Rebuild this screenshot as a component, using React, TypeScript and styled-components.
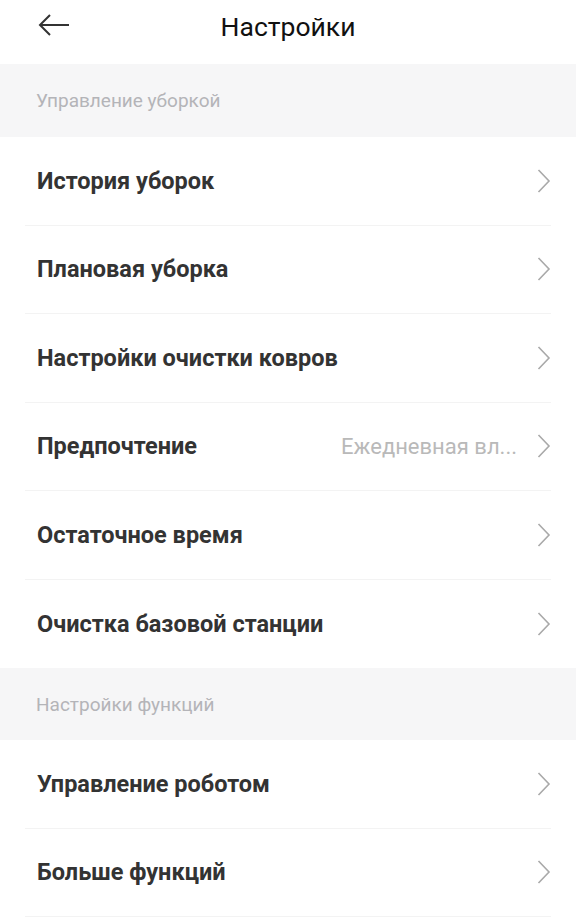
import React from "react";
import styled, { createGlobalStyle } from "styled-components";

const GlobalStyle = createGlobalStyle`
  html, body {
    margin: 0;
    padding: 0;
    background: #fff;
    font-family: Roboto, "Noto Sans", sans-serif;
  }
`;

const Page = styled.div`
  width: 576px;
  height: 917px;
  overflow: hidden;
  background: #fff;
`;

const Header = styled.div`
  height: 64px;
  display: flex;
  align-items: center;
  justify-content: center;
  position: relative;
  .back {
    position: absolute;
    left: 38px;
    top: 13px;
    cursor: pointer;
  }
  h1 {
    margin: 0 0 12px;
    font-size: 26.5px;
    font-weight: 400;
    color: #111;
  }
`;

const SectionTitle = styled.div<{ $h: number }>`
  height: ${(p) => p.$h}px;
  background: #f6f6f7;
  display: flex;
  align-items: center;
  padding-left: 36px;
  font-size: 19px;
  color: #b4b4b8;
`;

const Row = styled.div<{ $last?: boolean }>`
  height: 88.5px;
  box-sizing: border-box;
  margin: 0 25px;
  padding: 0 0 0 12px;
  display: flex;
  align-items: center;
  border-bottom: ${(p) => (p.$last ? "none" : "1px solid #f3f3f3")};
  .label {
    flex: 1;
    font-size: 23.5px;
    font-weight: 700;
    color: #333;
  }
  .value {
    font-size: 22px;
    color: #b9b9b9;
    margin-right: 20px;
  }
`;

const Chevron = () => (
  <svg width="14" height="26" viewBox="0 0 14 26" fill="none">
    <path d="M1.5 2 L12 13 L1.5 24" stroke="#a9a9a9" strokeWidth="1.6" />
  </svg>
);

const cleaning = [
  { label: "История уборок" },
  { label: "Плановая уборка" },
  { label: "Настройки очистки ковров" },
  { label: "Предпочтение", value: "Ежедневная вл..." },
  { label: "Остаточное время" },
  { label: "Очистка базовой станции" },
];

const functions = [{ label: "Управление роботом" }, { label: "Больше функций" }];

export default function App() {
  return (
    <Page>
      <GlobalStyle />
      <Header>
        <svg className="back" width="32" height="24" viewBox="0 0 32 24" fill="none">
          <path d="M31 12 H2 M12 2 L2 12 L12 22" stroke="#333" strokeWidth="2" />
        </svg>
        <h1>Настройки</h1>
      </Header>
      <SectionTitle $h={73}>Управление уборкой</SectionTitle>
      {cleaning.map((r, i) => (
        <Row key={r.label} $last={i === cleaning.length - 1}>
          <span className="label">{r.label}</span>
          {r.value && <span className="value">{r.value}</span>}
          <Chevron />
        </Row>
      ))}
      <SectionTitle $h={72}>Настройки функций</SectionTitle>
      {functions.map((r) => (
        <Row key={r.label}>
          <span className="label">{r.label}</span>
          <Chevron />
        </Row>
      ))}
    </Page>
  );
}
